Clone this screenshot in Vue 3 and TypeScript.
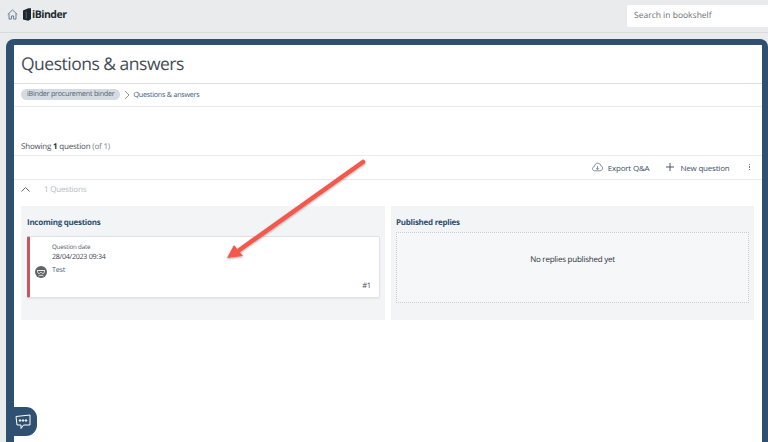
<script setup lang="ts">
const title = 'Questions & answers'
</script>

<template>
  <div class="page">
    <header class="top">
      <svg class="home" width="11" height="11" viewBox="0 0 12 12" fill="none" stroke="#5b7590" stroke-width="1">
        <path d="M.8 6 6 1l5.2 5M2.200 5v6h2.600V7.600h2.400V11h2.600V5" />
      </svg>
      <svg class="logo" width="8" height="13" viewBox="0 0 9 14">
        <path d="M0 2.500 6 0h3v12l-3 2-6-1.500z" fill="#1d2730" />
        <path d="M3 3.500h1.400v8H3z" fill="#4a5a68" />
      </svg>
      <span class="brand">iBinder</span>
      <div class="search">Search in bookshelf</div>
    </header>
    <div class="frame">
      <main class="panel">
        <h1>{{ title }}</h1>
        <nav class="crumbs">
          <span class="pill">iBinder procurement binder</span>
          <svg width="6" height="10" viewBox="0 0 6 10" fill="none" stroke="#8a9aa9"><path d="m1 1 4 4-4 4" /></svg>
          <span class="here">{{ title }}</span>
        </nav>
        <div class="showing">Showing <b>1</b> question <span>(of 1)</span></div>
        <div class="actions">
          <button class="act first">
            <svg width="11" height="10" viewBox="0 0 13 11" fill="none" stroke="#5f6f7f" stroke-width=".9">
              <path d="M3.200 10C1.500 10 .5 8.800.5 7.500s1-2.400 2.300-2.500C3.100 2.600 4.700 1 6.800 1c2 0 3.400 1.400 3.700 3.200 1.300.2 2 1.300 2 2.600 0 1.700-1.200 3.200-3 3.200zM6.500 4.500v4M4.800 7l1.700 1.700L8.200 7" />
            </svg>
            Export Q&amp;A
          </button>
          <button class="act">
            <svg width="8" height="8" viewBox="0 0 9 9" stroke="#33495f" stroke-width="1"><path d="M4.500 0v9M0 4.500h9" /></svg>
            New question
          </button>
          <span class="dots"><i></i><i></i><i></i></span>
        </div>
        <div class="group">
          <svg width="9" height="5" viewBox="0 0 9 5" fill="none" stroke="#53687c"><path d="m.5 4.500 4-4 4 4" /></svg>
          <span>1 Questions</span>
        </div>
        <section class="columns">
          <div class="col">
            <h2>Incoming questions</h2>
            <article class="card">
              <div class="qlabel">Question date</div>
              <div class="qdate">28/04/2023 09:34</div>
              <div class="quser">
                <span class="avatar">
                  <svg width="12" height="12" viewBox="0 0 12 12" fill="none" stroke="#e6e8ea" stroke-width="1">
                    <path d="M2 4.500h8M2.500 4.500c0 2 .5 3 1.500 3s1.500-1 2-1.500c.5.5 1 1.500 2 1.500s1.500-1 1.500-3M3.500 10c1.500-1 3.500-1 5 0" />
                  </svg>
                </span>
                <a>Test</a>
              </div>
              <div class="num">#1</div>
            </article>
          </div>
          <div class="col">
            <h2>Published replies</h2>
            <div class="empty">No replies published yet</div>
          </div>
        </section>
      </main>
    </div>
    <svg class="arrow" width="160" height="120" viewBox="0 0 160 120">
      <defs>
        <filter id="sh" x="-10%" y="-10%" width="120%" height="120%">
          <feDropShadow dx="0" dy="1" stdDeviation="1" flood-color="#000" flood-opacity=".35" />
        </filter>
      </defs>
      <g filter="url(#sh)">
        <path d="M137 7 12 96" stroke="#f2584c" stroke-width="4.500" stroke-linecap="round" fill="none" />
        <path d="M1 103 8 90l9 11z" fill="#f2584c" />
      </g>
    </svg>
    <button class="chat" aria-label="Chat">
      <svg width="16" height="16" viewBox="0 0 16 16" fill="none" stroke="#fff" stroke-width="1">
        <path d="M1 2.500 15 1v10H8.500L6 14.500V11H2z" stroke-linejoin="round" />
        <circle cx="5" cy="6.500" r=".8" fill="#fff" />
        <circle cx="8" cy="6.500" r=".8" fill="#fff" />
        <circle cx="11" cy="6.500" r=".8" fill="#fff" />
      </svg>
    </button>
  </div>
</template>

<style>
html, body { margin: 0; overflow: hidden; }
</style>

<style scoped>
.page {
  position: relative;
  width: 768px;
  height: 442px;
  overflow: hidden;
  background: #eaebed;
  font-family: "Open Sans", sans-serif;
  color: #3c4650;
  text-rendering: geometricPrecision;
}
.top {
  box-sizing: border-box;
  height: 33px;
  display: flex;
  align-items: center;
  padding: 0 0 3px 7px;
  border-bottom: 1px solid #d9dadc;
}
.home { margin-right: 5px; }
.logo { margin-right: 1px; }
.brand { font: 700 10.500px "Open Sans", sans-serif; color: #222b33; letter-spacing: -.5px; }
.search {
  box-sizing: border-box;
  margin-left: auto;
  width: 141px;
  height: 22px;
  margin-top: 2px;
  padding-left: 7px;
  border-radius: 2px 0 0 2px;
  background: #fff;
  font-size: 8.500px;
  line-height: 22px;
  color: #6b6f73;
}
.frame {
  box-sizing: border-box;
  margin: 6px 0 0 6px;
  height: 403px;
  padding: 6px 6px 0 8px;
  border-radius: 8px 8px 0 0;
  background: #2f5070;
}
.panel { height: 100%; background: #fff; }
h1 {
  box-sizing: border-box;
  margin: 0;
  height: 39px;
  padding-left: 7px;
  border-bottom: 1px solid #dcdee0;
  font-size: 17.500px;
  font-weight: 400;
  letter-spacing: -.5px;
  line-height: 39px;
  color: #444c54;
}
.crumbs {
  box-sizing: border-box;
  height: 23px;
  display: flex;
  align-items: center;
  gap: 3px;
  padding: 0 0 1px 7px;
  border-bottom: 1px solid #e8eaec;
  font-size: 7.200px;
  letter-spacing: -.25px;
}
.pill {
  padding: 0 6px;
  height: 11px;
  line-height: 11px;
  border-radius: 6px;
  background: #d5dbe2;
  color: #51616f;
}
.crumbs svg { margin-left: 1px; }
.here { color: #3c5c7a; }
.showing {
  box-sizing: border-box;
  height: 49px;
  padding: 32px 0 0 7px;
  border-bottom: 1px solid #e9eaec;
  font-size: 8px;
  letter-spacing: -.2px;
  line-height: 15px;
  color: #4a5158;
}
.showing b { color: #2c3238; }
.showing span { color: #7c848b; }
.actions {
  box-sizing: border-box;
  height: 24px;
  display: flex;
  align-items: center;
  justify-content: flex-end;
  border-bottom: 1px solid #e9eaec;
  padding: 0 12px 1px 0;
}
.act {
  display: flex;
  align-items: center;
  gap: 6px;
  border: 0;
  padding: 0;
  background: none;
  font: 400 8px "Open Sans", sans-serif;
  letter-spacing: -.2px;
  color: #3d5268;
}
.first { margin-right: 17px; gap: 5px; }
.dots { display: flex; flex-direction: column; gap: 1px; margin-left: 19px; }
.dots i { width: 1.500px; height: 1.500px; background: #66778a; }
.group {
  box-sizing: border-box;
  height: 20px;
  display: flex;
  align-items: center;
  gap: 14px;
  padding: 0 0 1px 7px;
  font-size: 8px;
  letter-spacing: -.2px;
  color: #b4bbc2;
}
.columns {
  margin: 6px 8px 0 7px;
  height: 114px;
  display: grid;
  grid-template-columns: 364px 1fr;
  gap: 6px;
}
.col { background: #f3f4f6; padding: 0 5px 0 6px; }
h2 {
  margin: 0;
  height: 26px;
  font-size: 8px;
  font-weight: 700;
  letter-spacing: -.27px;
  line-height: 33px;
  color: #2f4f6e;
}
.col:last-child { padding: 0 5px; }
.card {
  box-sizing: border-box;
  height: 62px;
  margin-top: 4px;
  padding: 5px 0 0 22px;
  position: relative;
  border: 1px solid #dfe1e4;
  border-left: 3px solid #c7565f;
  border-radius: 2px;
  background: #fff;
  box-shadow: 0 1px 2px rgba(0, 0, 0, .06);
}
.qlabel { font-size: 6.200px; letter-spacing: -.2px; line-height: 9px; color: #555d65; }
.qdate { font-size: 7.100px; letter-spacing: -.25px; line-height: 10px; margin-top: 1px; color: #3f464d; }
.quser { position: relative; margin-top: 2px; font-size: 7.100px; letter-spacing: -.2px; line-height: 12px; color: #3e6185; }
.avatar {
  position: absolute;
  left: -17px;
  top: 2px;
  width: 12px;
  height: 12px;
  border-radius: 50%;
  background: #5f6469;
  display: flex;
}
.num { position: absolute; right: 8px; bottom: 5px; font-size: 7.600px; letter-spacing: -.2px; line-height: 11px; color: #4a5158; }
.empty {
  box-sizing: border-box;
  height: 71px;
  border: 1px dotted #c9cdd1;
  background: #f6f7f8;
  display: flex;
  align-items: center;
  justify-content: center;
  padding-bottom: 16px;
  font-size: 8px;
  letter-spacing: -.23px;
  color: #2c3238;
}
.arrow { position: absolute; left: 226px; top: 155px; }
.chat {
  position: absolute;
  left: 8px;
  top: 407px;
  width: 29px;
  height: 29px;
  padding: 0;
  border: 0;
  border-radius: 0 11px 11px 0;
  background: #2f5070;
  display: flex;
  align-items: center;
  justify-content: center;
}
</style>
